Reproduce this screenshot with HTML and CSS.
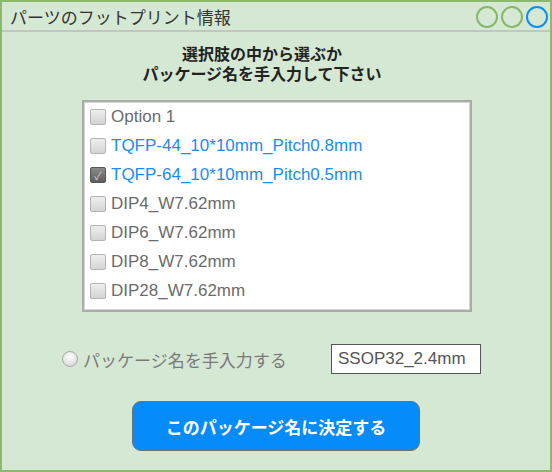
FILE: index.html
```html
<!DOCTYPE html>
<html lang="ja">
<head>
    <meta charset="UTF-8">
    <title>パーツのフットプリント情報</title>
    <link rel="stylesheet" href="styles.css">
</head>
<body>
    <div class="window">
        <div class="title-bar">
            <span class="title">パーツのフットプリント情報</span>
            <div class="dots">
                <span class="dot"></span>
                <span class="dot"></span>
                <span class="dot active"></span>
            </div>
        </div>

        <div class="content">
            <p class="lead">選択肢の中から選ぶか<br>パッケージ名を手入力して下さい</p>

            <div class="list-box">
                <label class="item"><span class="check"></span>Option 1</label>
                <label class="item link"><span class="check"></span>TQFP-44_10*10mm_Pitch0.8mm</label>
                <label class="item link"><span class="check checked">&#10003;</span>TQFP-64_10*10mm_Pitch0.5mm</label>
                <label class="item"><span class="check"></span>DIP4_W7.62mm</label>
                <label class="item"><span class="check"></span>DIP6_W7.62mm</label>
                <label class="item"><span class="check"></span>DIP8_W7.62mm</label>
                <label class="item"><span class="check"></span>DIP28_W7.62mm</label>
            </div>

            <div class="manual-row">
                <label class="manual"><span class="radio"></span>パッケージ名を手入力する</label>
                <div class="text-box">SSOP32_2.4mm</div>
            </div>

            <button class="submit">このパッケージ名に決定する</button>
        </div>
    </div>
</body>
</html>
```

FILE: styles.css
```css
body { margin: 0; font-family: "Liberation Sans", "Noto Sans CJK JP", sans-serif; }
.window { width: 552px; height: 472px; box-sizing: border-box; border: 2px solid #8db96c; background-color: #d5e8d4; display: flex; flex-direction: column; }

.title-bar { height: 28px; border-bottom: 2px solid #c2c6c0; display: flex; align-items: center; justify-content: space-between; padding: 0 2px 0 8px; }
.title { font-size: 17px; color: #333; }
.dots { display: flex; gap: 3px; padding-top: 1px; }
.dot { width: 18px; height: 18px; border: 2px solid #86b867; border-radius: 50%; }
.dot.active { border-color: #118cf6; }

.content { display: flex; flex-direction: column; align-items: center; padding-top: 13px; }
.lead { margin: 0 28px 0 0; font-size: 16px; line-height: 20px; font-weight: bold; color: #222; text-align: center; }

.list-box { width: 390px; height: 212px; box-sizing: border-box; margin-top: 15px; margin-left: 2px; background: #fff; border: 2px solid #a9aca8; box-shadow: inset 0 0 0 1px #d6d6d6; padding: 5px 6px; display: flex; flex-direction: column; gap: 9px; }
.item { display: flex; align-items: center; gap: 5px; height: 20px; font-size: 17px; color: #6b6b6b; }
.item.link { color: #1a8cf0; }
.check { width: 14px; height: 14px; border: 1px solid #b4b4b4; border-radius: 2px; background: linear-gradient(#eeeeee, #d4d4d4); display: flex; align-items: center; justify-content: center; font-size: 11px; color: #cfcfcf; }
.check.checked { background: linear-gradient(#8a8a8a, #5e5e5e); border-color: #555; }

.manual-row { align-self: stretch; display: flex; align-items: center; margin-top: 32px; padding-left: 60px; }
.manual { display: flex; align-items: center; gap: 5px; font-size: 17px; color: #7a7a7a; width: 269px; }
.radio { width: 14px; height: 14px; border: 1px solid #a8a8a8; border-radius: 50%; background: radial-gradient(circle at 50% 35%, #ffffff, #d0d0d0); }
.text-box { width: 150px; height: 30px; box-sizing: border-box; border: 1px solid #555; background: #fff; padding-left: 6px; font-size: 17px; line-height: 28px; color: #555; }

.submit { margin-top: 27px; width: 288px; height: 50px; background-color: #058cfa; color: #fff; border: 1px solid #707070; border-radius: 9px; font-family: "Liberation Sans", "Noto Sans CJK JP", sans-serif; font-size: 17px; font-weight: bold; }
```
